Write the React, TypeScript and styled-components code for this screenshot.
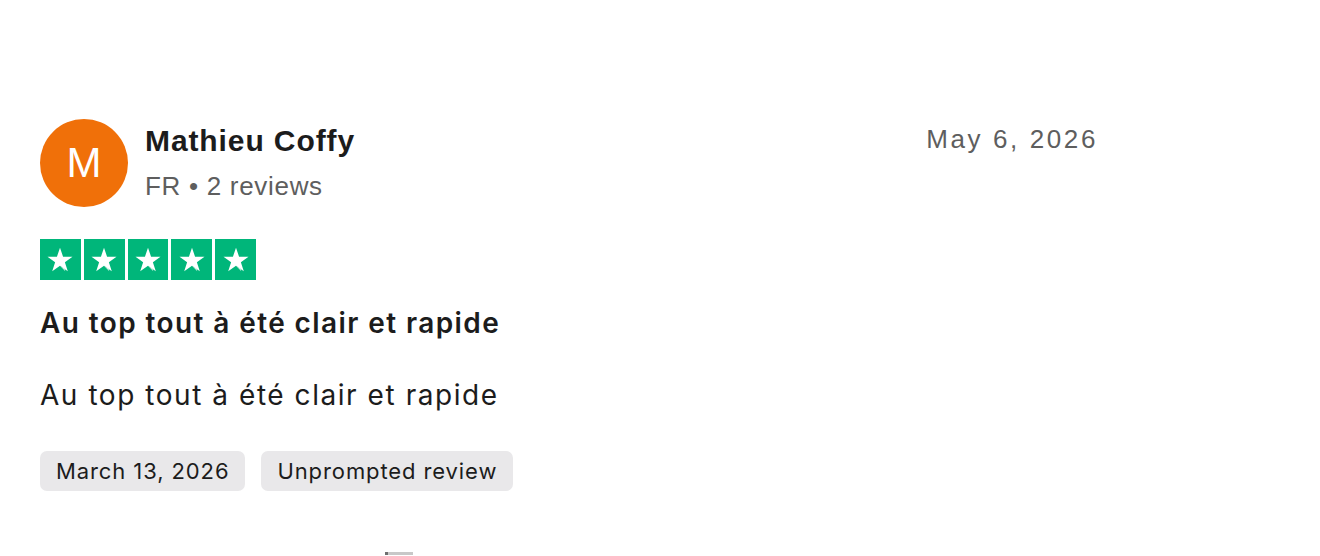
import React from "react";
import styled, { createGlobalStyle } from "styled-components";

const GlobalStyle = createGlobalStyle`
  html, body {
    margin: 0;
    padding: 0;
    background: #ffffff;
  }
  body {
    font-family: Inter, "Liberation Sans", Arial, sans-serif;
    color: #1c1c1c;
    -webkit-font-smoothing: antialiased;
  }
`;

const Page = styled.div`
  width: 1320px;
  height: 556px;
  overflow: hidden;
  padding: 119px 0 0 40px;
  box-sizing: border-box;
`;

const Card = styled.article`
  width: 1058px;
  display: flex;
  flex-direction: column;
`;

const Header = styled.header`
  display: flex;
  align-items: flex-start;
  justify-content: space-between;
`;

const Consumer = styled.div`
  display: flex;
  align-items: center;
  gap: 17px;
`;

const Avatar = styled.div`
  width: 88px;
  height: 88px;
  border-radius: 50%;
  background: #f07009;
  color: #ffffff;
  display: flex;
  align-items: center;
  justify-content: center;
  font-family: "Liberation Sans", Arial, sans-serif;
  font-size: 42px;
  font-weight: 400;
`;

const Info = styled.div`
  display: flex;
  flex-direction: column;
  gap: 12px;
`;

const Name = styled.span`
  font-family: "Liberation Sans", Arial, sans-serif;
  font-size: 30px;
  font-weight: 700;
  letter-spacing: 0.9px;
  color: #1c1c1c;
  line-height: 1.2;
`;

const Meta = styled.span`
  font-family: "Liberation Sans", Arial, sans-serif;
  font-size: 26px;
  letter-spacing: 0.7px;
  color: #5e5e5e;
  line-height: 1.2;
`;

const PublishedDate = styled.time`
  font-family: "Liberation Sans", Arial, sans-serif;
  font-size: 26px;
  letter-spacing: 2.6px;
  color: #5e5e5e;
  line-height: 1;
  margin-top: 7px;
`;

const Stars = styled.div`
  display: flex;
  gap: 3px;
  margin-top: 32px;
`;

const StarBox = styled.div`
  width: 40.8px;
  height: 41px;
  background: #00b67a;
  display: flex;
  align-items: center;
  justify-content: center;
`;

const Title = styled.h2`
  margin: 25px 0 0;
  font-size: 28px;
  font-weight: 600;
  letter-spacing: 1.4px;
  line-height: 1.3;
  color: #1c1c1c;
`;

const Body = styled.p`
  margin: 36px 0 0;
  font-size: 28px;
  font-weight: 400;
  letter-spacing: 1.55px;
  line-height: 1.3;
  color: #1c1c1c;
`;

const Tags = styled.div`
  display: flex;
  gap: 16px;
  margin-top: 37px;
`;

const Tag = styled.span`
  height: 40px;
  padding: 0 16px;
  border-radius: 7px;
  background: #e9e8ea;
  display: flex;
  align-items: center;
  font-size: 22px;
  letter-spacing: 0.9px;
  color: #1c1c1c;
`;

const Peek = styled.div`
  margin: 61px 0 0 345px;
  width: 25px;
  height: 3px;
  background: #c8c8c8;
  border-left: 3px solid #6f6f6f;
`;

const Star = () => (
  <svg width="30" height="30" viewBox="0 0 24 24">
    <path
      d="M12 2.2l2.45 7.16h7.55l-6.1 4.43 2.33 7.2L12 16.56l-6.23 4.43 2.33-7.2L2 9.36h7.55z"
      fill="#ffffff"
    />
    <path d="M16.23 20.99L15.6 18.8 12 16.56z" fill="#d7f2e6" />
  </svg>
);

const App = () => {
  return (
    <>
      <GlobalStyle />
      <Page>
        <Card>
          <Header>
            <Consumer>
              <Avatar>M</Avatar>
              <Info>
                <Name>Mathieu Coffy</Name>
                <Meta>FR • 2 reviews</Meta>
              </Info>
            </Consumer>
            <PublishedDate>May 6, 2026</PublishedDate>
          </Header>
          <Stars>
            {[0, 1, 2, 3, 4].map((i) => (
              <StarBox key={i}>
                <Star />
              </StarBox>
            ))}
          </Stars>
          <Title>Au top tout à été clair et rapide</Title>
          <Body>Au top tout à été clair et rapide</Body>
          <Tags>
            <Tag>March 13, 2026</Tag>
            <Tag>Unprompted review</Tag>
          </Tags>
          <Peek />
        </Card>
      </Page>
    </>
  );
};

export default App;
